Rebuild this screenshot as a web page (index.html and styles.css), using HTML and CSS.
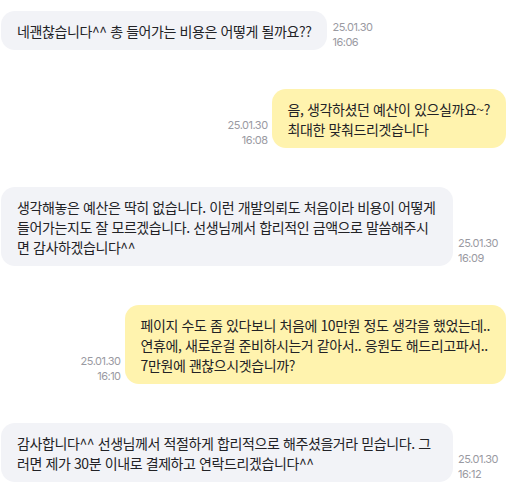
FILE: index.html
```html
<!DOCTYPE html>
<html lang="ko">
<head>
<meta charset="utf-8">
<link rel="stylesheet" href="styles.css">
</head>
<body>
<div class="chat">
  <div class="row left">
    <div class="bubble grey">네괜찮습니다^^ 총 들어가는 비용은 어떻게 될까요??</div>
    <div class="time"><span>25.01.30</span><span>16:06</span></div>
  </div>
  <div class="row right">
    <div class="time"><span>25.01.30</span><span>16:08</span></div>
    <div class="bubble yellow">음, 생각하셨던 예산이 있으실까요~?<br>최대한 맞춰드리겟습니다</div>
  </div>
  <div class="row left">
    <div class="bubble grey wide">생각해놓은 예산은 딱히 없습니다. 이런 개발의뢰도 처음이라 비용이 어떻게 들어가는지도 잘 모르겠습니다. 선생님께서 합리적인 금액으로 말씀해주시면 감사하겠습니다^^</div>
    <div class="time"><span>25.01.30</span><span>16:09</span></div>
  </div>
  <div class="row right">
    <div class="time"><span>25.01.30</span><span>16:10</span></div>
    <div class="bubble yellow">페이지 수도 좀 있다보니 처음에 10만원 정도 생각을 했었는데..<br>연휴에, 새로운걸 준비하시는거 같아서.. 응원도 해드리고파서..<br>7만원에 괜찮으시겟습니까?</div>
  </div>
  <div class="row left">
    <div class="bubble grey wide">감사합니다^^ 선생님께서 적절하게 합리적으로 해주셨을거라 믿습니다. 그러면 제가 30분 이내로 결제하고 연락드리겠습니다^^</div>
    <div class="time"><span>25.01.30</span><span>16:12</span></div>
  </div>
</div>
</body>
</html>
```
FILE: styles.css
```css
html, body {
  margin: 0;
  padding: 0;
  background: #ffffff;
}
body {
  font-family: "Noto Sans CJK KR", sans-serif;
  color: #222226;
}
.chat {
  display: flex;
  flex-direction: column;
  gap: 39px;
  padding: 11px 4px 0 1px;
}
.row {
  display: flex;
  align-items: flex-end;
  gap: 5px;
}
.row.right {
  justify-content: flex-end;
  gap: 4px;
}
.bubble {
  font-size: 14px;
  line-height: 20px;
  padding: 10px 16px 9px;
  border-radius: 14px;
  letter-spacing: -0.4px;
  white-space: nowrap;
}
.bubble.wide {
  max-width: 420px;
  white-space: normal;
}
.grey {
  background: #f2f3f7;
}
.yellow {
  background: #fff3ae;
}
.time {
  display: flex;
  flex-direction: column;
  font-family: Inter, "Noto Sans CJK KR", sans-serif;
  font-size: 11px;
  line-height: 15px;
  color: #9a9aa2;
  letter-spacing: -0.5px;
}
.row.left .time {
  align-items: flex-start;
}
.row.right .time {
  align-items: flex-end;
}
```
